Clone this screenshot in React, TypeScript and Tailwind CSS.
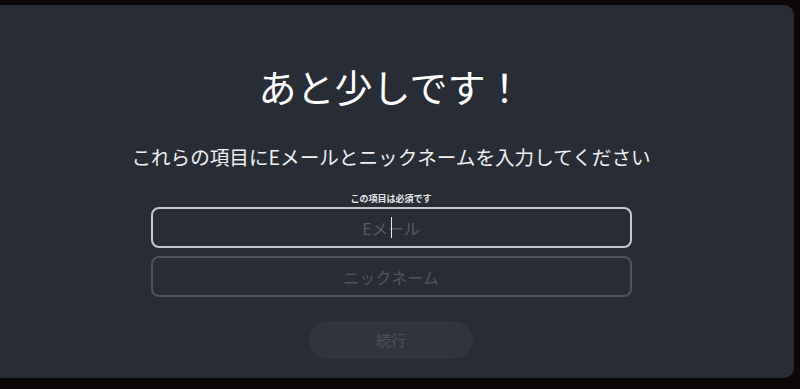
export default function App() {
  return (
    <div
      className="h-[389px] w-[800px] overflow-hidden bg-[#0b0807] pt-[5px]"
      style={{ fontFamily: '"Noto Sans CJK JP", "Noto Sans", sans-serif' }}
    >
      <div className="ml-[-12px] flex h-[373px] w-[806px] flex-col items-center rounded-[10px] bg-[#282d35] pt-[58px]">
        <h1 className="text-[38px] leading-[46px] font-normal text-white">あと少しです！</h1>
        <p className="mt-[34px] text-[19.6px] leading-[28px] text-[#eef0f2]">
          これらの項目にEメールとニックネームを入力してください
        </p>
        <div className="mt-[22px] text-[9px] leading-[12px] font-bold text-[#e6e8ea]">この項目は必須です</div>
        <div className="relative mt-[2px]">
          <input
            className="h-[41px] w-[481px] rounded-[8px] border-2 border-[#c4c8cc] bg-transparent text-center text-[16px] text-white outline-none placeholder:text-[#555b63]"
            placeholder="Eメール"
          />
          <span className="absolute left-[240px] top-[10px] h-[21px] w-px bg-[#e8e8e8]" />
        </div>
        <input
          className="mt-[8px] h-[41px] w-[481px] rounded-[8px] border-2 border-[#4e535a] bg-transparent text-center text-[16px] text-white outline-none placeholder:text-[#4f555d]"
          placeholder="ニックネーム"
        />
        <button className="mt-[24px] h-[38px] w-[164px] rounded-full bg-[#2f343e] text-[15px] text-[#4b5059]">
          続行
        </button>
      </div>
    </div>
  );
}
